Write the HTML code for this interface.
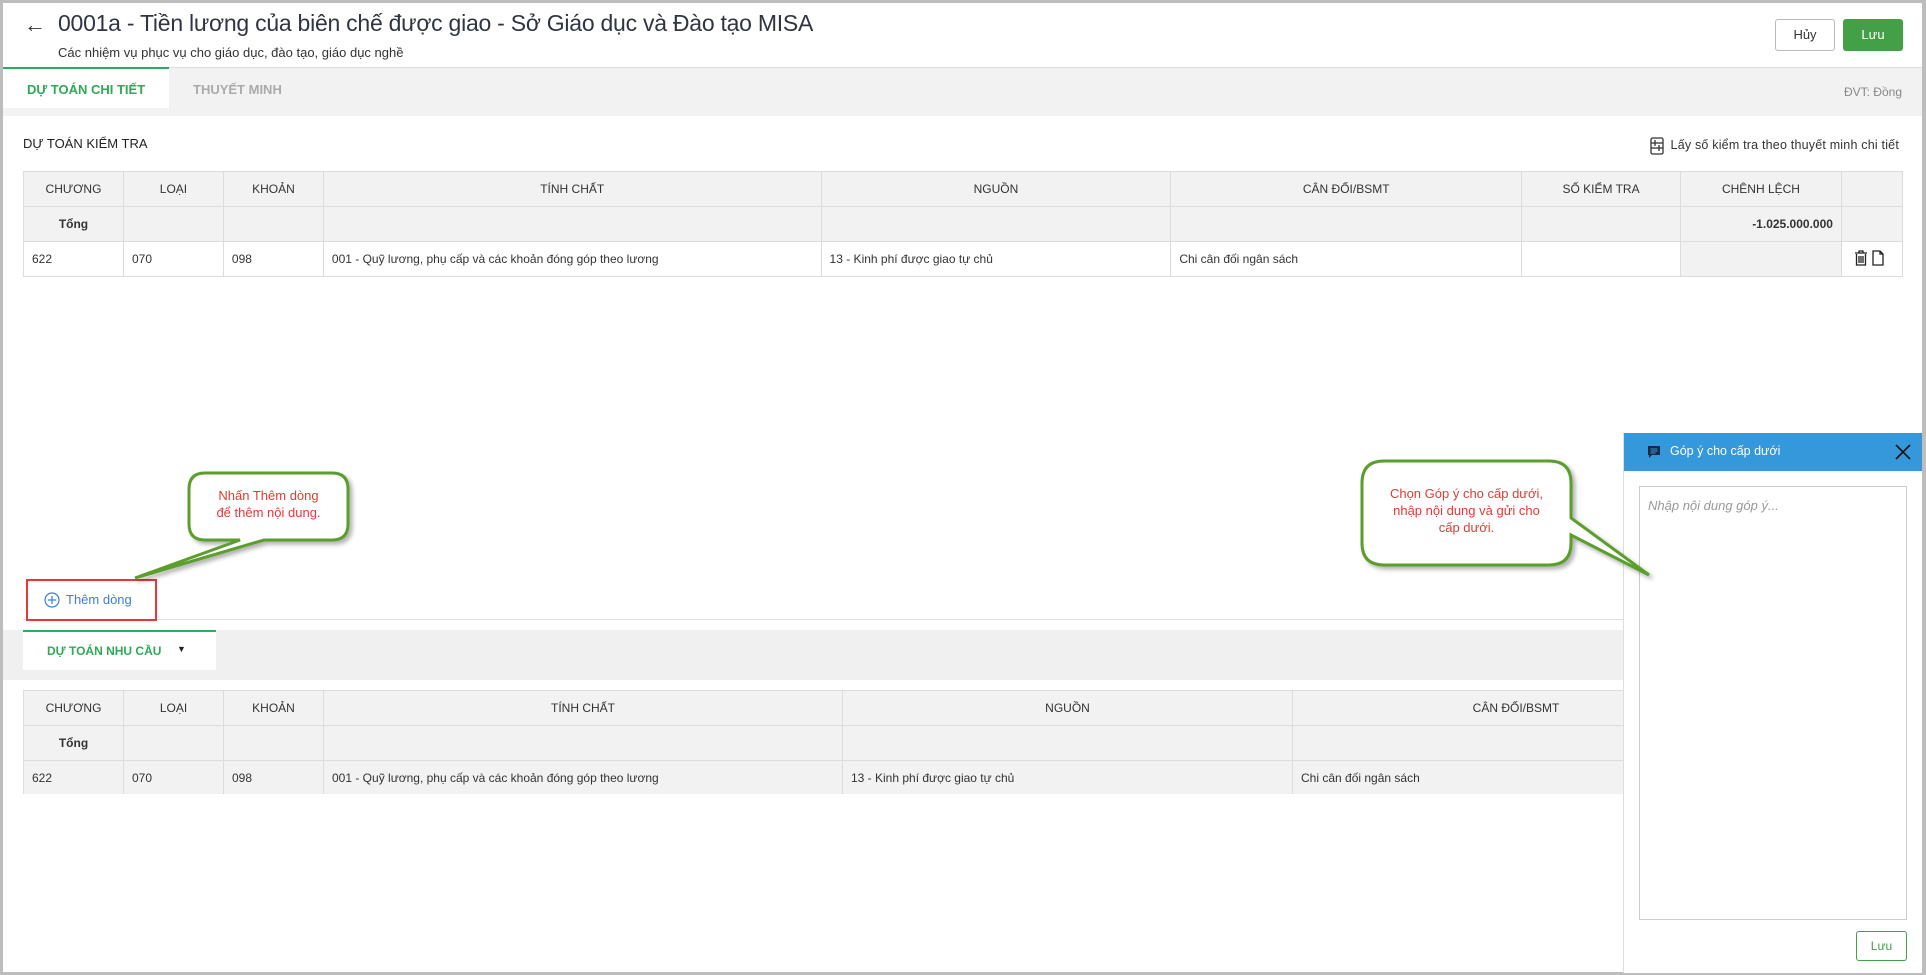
<!DOCTYPE html>
<html><head><meta charset="utf-8"><style>
*{box-sizing:border-box;margin:0;padding:0}
body{width:1926px;height:975px;position:relative;overflow:hidden;background:#fff;font-family:"Liberation Sans",sans-serif;color:#333}
.a{position:absolute;white-space:nowrap}
table{position:absolute;border-collapse:collapse;font-size:12px;color:#333}
td{border:1px solid #dcdcdc;height:35px;padding:0 8px;vertical-align:middle}
.h td{background:#f2f2f2;text-align:center}
.g td{background:#f2f2f2}
.c{text-align:center}
</style></head><body>
<div class="a" style="left:0;top:0;width:1926px;height:3px;background:#bdbdbd"></div>
<div class="a" style="left:0;top:0;width:3px;height:975px;background:#bdbdbd"></div>
<div class="a" style="left:1922px;top:0;width:4px;height:975px;background:#bdbdbd"></div>
<div class="a" style="left:0;top:972px;width:1926px;height:3px;background:#bdbdbd"></div>

<div class="a" style="left:24px;top:12px;font-size:22px;color:#333">←</div>
<div class="a" style="left:58px;top:10px;font-size:23px;color:#2f3542;letter-spacing:-0.25px">0001a - Tiền lương của biên chế được giao - Sở Giáo dục và Đào tạo MISA</div>
<div class="a" style="left:58px;top:45px;font-size:13px;color:#333">Các nhiệm vụ phục vụ cho giáo dục, đào tạo, giáo dục nghề</div>
<div class="a" style="left:1775px;top:19px;width:60px;height:32px;border:1px solid #bbb;border-radius:3px;font-size:13px;text-align:center;line-height:30px">Hủy</div>
<div class="a" style="left:1843px;top:19px;width:60px;height:32px;background:#43a047;border-radius:3px;color:#fff;font-size:13px;text-align:center;line-height:32px">Lưu</div>

<div class="a" style="left:3px;top:67px;width:1919px;height:49px;background:#f2f2f2;border-top:1px solid #ddd"></div>
<div class="a" style="left:3px;top:67px;width:166px;height:41px;background:#fff;border-top:2px solid #27ae60"></div>
<div class="a" style="left:27px;top:82px;font-size:13px;font-weight:bold;color:#2eaa57">DỰ TOÁN CHI TIẾT</div>
<div class="a" style="left:193px;top:82px;font-size:13px;font-weight:bold;color:#aaa">THUYẾT MINH</div>
<div class="a" style="left:1830px;top:85px;width:72px;text-align:right;font-size:12px;color:#888">ĐVT: Đồng</div>

<div class="a" style="left:23px;top:136px;font-size:13px;color:#222">DỰ TOÁN KIỂM TRA</div>
<svg class="a" style="left:1649px;top:137px" width="16" height="18" viewBox="0 0 16 18" fill="none" stroke="#333" stroke-width="1.3"><rect x="2" y="1" width="12" height="16" rx="1.5"/><line x1="2" y1="6" x2="14" y2="6"/><line x1="2" y1="11" x2="14" y2="11"/><line x1="6" y1="3" x2="6" y2="9"/><line x1="10" y1="8" x2="10" y2="14"/></svg>
<div class="a" style="left:1668px;top:138px;width:231px;text-align:right;font-size:12.5px;color:#333;letter-spacing:0.2px">Lấy số kiểm tra theo thuyết minh chi tiết</div>

<table style="left:23px;top:171px;width:1880px">
<tr class="h"><td style="width:100px">CHƯƠNG</td><td style="width:100px">LOẠI</td><td style="width:100px">KHOẢN</td><td style="width:498px">TÍNH CHẤT</td><td style="width:350px">NGUỒN</td><td style="width:351px">CÂN ĐỐI/BSMT</td><td style="width:159px">SỐ KIỂM TRA</td><td style="width:161px">CHÊNH LỆCH</td><td style="width:60px"></td></tr>
<tr class="g"><td class="c" style="font-weight:bold">Tổng</td><td></td><td></td><td></td><td></td><td></td><td></td><td style="text-align:right;font-weight:bold">-1.025.000.000</td><td></td></tr>
<tr><td>622</td><td>070</td><td>098</td><td>001 - Quỹ lương, phụ cấp và các khoản đóng góp theo lương</td><td>13 - Kinh phí được giao tự chủ</td><td>Chi cân đối ngân sách</td><td></td><td style="background:#f2f2f2"></td><td style="padding:0">
<svg width="60" height="20" viewBox="0 0 60 20" fill="none" stroke="#222" stroke-width="1.3"><path d="M13 5h12M17 5V3h4v2M14.5 6v11h9V6M17 8v7M19 8v7M21 8v7"/><path d="M31 3h7l3 3v11h-10zM38 3v3h3"/></svg></td></tr>
</table>

<div class="a" style="left:23px;top:619px;width:1600px;height:1px;background:#ddd"></div>
<div class="a" style="left:26px;top:579px;width:131px;height:42px;border:2px solid #e53935"></div>
<svg class="a" style="left:44px;top:592px" width="16" height="16" viewBox="0 0 16 16" fill="none" stroke="#3b7ddd" stroke-width="1.2"><circle cx="8" cy="8" r="7"/><path d="M8 4v8M4 8h8"/></svg>
<div class="a" style="left:66px;top:592px;font-size:13px;color:#3b7ddd">Thêm dòng</div>

<div class="a" style="left:3px;top:630px;width:1620px;height:50px;background:#f0f0f0"></div>
<div class="a" style="left:23px;top:630px;width:193px;height:40px;background:#fff;border-top:2px solid #27ae60"></div>
<div class="a" style="left:47px;top:644px;font-size:12px;font-weight:bold;color:#2eaa57">DỰ TOÁN NHU CẦU</div>
<div class="a" style="left:177px;top:644px;font-size:9px;color:#222">▼</div>

<div class="a" style="left:23px;top:690px;width:1600px;height:104px;overflow:hidden">
<table style="left:0;top:0;width:1717px">
<tr class="h"><td style="width:100px">CHƯƠNG</td><td style="width:100px">LOẠI</td><td style="width:100px">KHOẢN</td><td style="width:519px">TÍNH CHẤT</td><td style="width:450px">NGUỒN</td><td>CÂN ĐỐI/BSMT</td></tr>
<tr class="g"><td class="c" style="font-weight:bold">Tổng</td><td></td><td></td><td></td><td></td><td></td></tr>
<tr class="g"><td>622</td><td>070</td><td>098</td><td>001 - Quỹ lương, phụ cấp và các khoản đóng góp theo lương</td><td>13 - Kinh phí được giao tự chủ</td><td>Chi cân đối ngân sách</td></tr>
</table></div>

<div class="a" style="left:1623px;top:433px;width:299px;height:540px;background:#fff;border-left:1px solid #ddd"></div>
<div class="a" style="left:1624px;top:433px;width:298px;height:38px;background:#3498db"></div>
<svg class="a" style="left:1647px;top:445px" width="14" height="14" viewBox="0 0 14 14"><path d="M1 1h12v9H5l-3 3v-3H1z" fill="#1a2a44"/><path d="M3.5 4h7M3.5 6h7M3.5 8h5" stroke="#3498db" stroke-width="1"/></svg>
<div class="a" style="left:1670px;top:444px;font-size:12.5px;color:#fff">Góp ý cho cấp dưới</div>
<svg class="a" style="left:1895px;top:444px" width="16" height="16" viewBox="0 0 16 16" stroke="#111" stroke-width="1.6"><path d="M1 1l14 14M15 1L1 15"/></svg>
<div class="a" style="left:1639px;top:486px;width:268px;height:434px;border:1px solid #ccc"></div>
<div class="a" style="left:1648px;top:498px;font-size:13px;font-style:italic;color:#999">Nhập nội dung góp ý...</div>
<div class="a" style="left:1856px;top:931px;width:51px;height:30px;border:1px solid #43a047;border-radius:3px;font-size:12px;color:#43a047;text-align:center;line-height:28px">Lưu</div>

<svg class="a" style="left:0;top:0" width="1926" height="975">
<defs><filter id="s" x="-20%" y="-20%" width="140%" height="140%"><feDropShadow dx="3" dy="3" stdDeviation="2" flood-color="#000" flood-opacity="0.3"/></filter></defs>
<path filter="url(#s)" d="M205 473H332Q348 473 348 489V524Q348 540 332 540H264L135 578L240 540H205Q189 540 189 524V489Q189 473 205 473Z" fill="#fff" stroke="#5c9e2e" stroke-width="3"/>
<path filter="url(#s)" d="M1384 461H1549Q1571 461 1571 483V518L1649 575L1571 535V543Q1571 565 1549 565H1384Q1362 565 1362 543V483Q1362 461 1384 461Z" fill="#fff" stroke="#5c9e2e" stroke-width="3"/>
</svg>
<div class="a" style="left:189px;top:487px;width:159px;text-align:center;font-size:13px;line-height:17px;color:#e53935">Nhấn Thêm dòng<br>để thêm nội dung.</div>
<div class="a" style="left:1362px;top:485px;width:209px;text-align:center;font-size:13px;line-height:17px;color:#e53935">Chọn Góp ý cho cấp dưới,<br>nhập nội dung và gửi cho<br>cấp dưới.</div>
</body></html>
